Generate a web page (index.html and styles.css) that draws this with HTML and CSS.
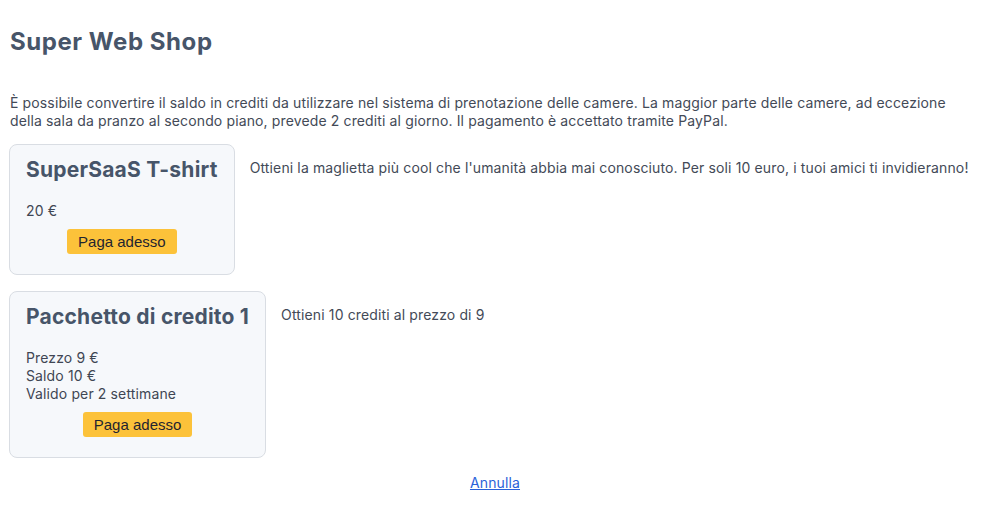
FILE: index.html
```html
<!DOCTYPE html>
<html lang="it">
<head>
<meta charset="utf-8">
<title>Super Web Shop</title>
<link rel="stylesheet" href="styles.css">
</head>
<body>
<main class="page">
  <h1 class="title">Super Web Shop</h1>
  <p class="intro">È possibile convertire il saldo in crediti da utilizzare nel sistema di prenotazione delle camere. La maggior parte delle camere, ad eccezione della sala da pranzo al secondo piano, prevede 2 crediti al giorno. Il pagamento è accettato tramite PayPal.</p>

  <section class="product">
    <div class="card">
      <h2 class="card-title">SuperSaaS T-shirt</h2>
      <div class="card-info">20 €</div>
      <div class="card-action"><button class="pay">Paga adesso</button></div>
    </div>
    <p class="desc">Ottieni la maglietta più cool che l'umanità abbia mai conosciuto. Per soli 10 euro, i tuoi amici ti invidieranno!</p>
  </section>

  <section class="product">
    <div class="card">
      <h2 class="card-title">Pacchetto di credito 1</h2>
      <div class="card-info">Prezzo 9 €<br>Saldo 10 €<br>Valido per 2 settimane</div>
      <div class="card-action"><button class="pay">Paga adesso</button></div>
    </div>
    <p class="desc">Ottieni 10 crediti al prezzo di 9</p>
  </section>

  <div class="cancel"><a href="#" class="cancel-link">Annulla</a></div>
</main>
</body>
</html>
```

FILE: styles.css
```css
html, body {
  margin: 0;
  padding: 0;
  background: #ffffff;
}

body {
  font-family: Inter, "Noto Sans", "Liberation Sans", sans-serif;
  font-size: 14px;
  line-height: 18px;
  letter-spacing: 0.13px;
  color: #434a57;
}

.page {
  padding: 27px 9px 0 9px;
}

.title {
  margin: 0 0 0 1px;
  font-size: 24px;
  line-height: 30px;
  font-weight: 700;
  letter-spacing: 0.55px;
  color: #475569;
}

.intro {
  margin: 37px 0 14px 1px;
}

.product {
  display: flex;
  align-items: flex-start;
  margin-bottom: 16px;
}

.card {
  flex: none;
  background: #f6f8fb;
  border: 1px solid #d9dde3;
  border-radius: 8px;
  padding: 11px 16px 20px 16px;
}

.card-title {
  margin: 0 0 18px 0;
  font-size: 21px;
  line-height: 28px;
  font-weight: 700;
  letter-spacing: 0.22px;
  color: #475569;
}

.card-info {
  color: #3f4653;
}

.card-action {
  display: flex;
  justify-content: center;
  margin-top: 9px;
}

.pay {
  font-family: "Liberation Sans", Arial, sans-serif;
  font-size: 15px;
  line-height: 17px;
  letter-spacing: 0;
  color: #1f2430;
  background: #fcc23a;
  border: none;
  border-radius: 3px;
  padding: 4px 11px;
}

.desc {
  margin: 15px 0 0 15px;
  white-space: nowrap;
}

.cancel {
  text-align: center;
  margin-top: 16px;
  padding-left: 6px;
}

.cancel-link {
  color: #2a62d9;
  text-decoration: underline;
}
```
